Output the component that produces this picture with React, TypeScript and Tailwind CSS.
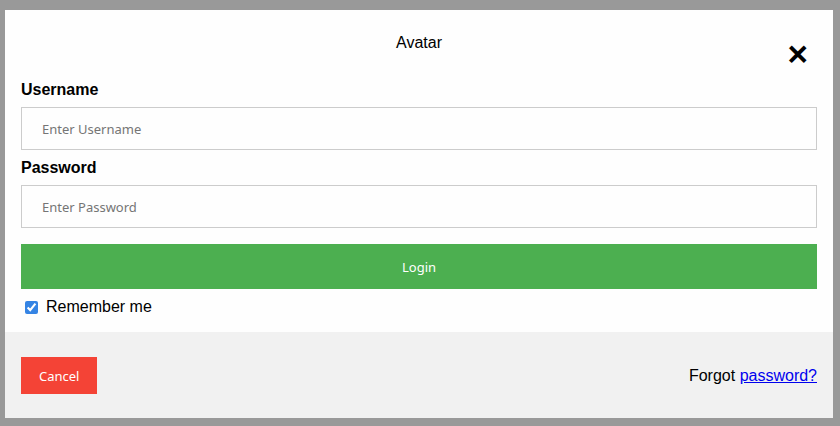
export default function App() {
  return (
    <div className="min-h-screen bg-[#999999] pt-[10px] font-['Liberation_Sans',Arial,sans-serif]">
      <div className="ml-[5px] w-[828px] bg-[#fefefe] flex flex-col">
        {/* Header with avatar alt text and close */}
        <div className="relative mt-[24px] mb-[12px] h-[18px] text-center text-[16px] leading-[18px] text-black">
          Avatar
          <span className="absolute right-[25px] top-0 text-[35px] font-bold leading-[39px] text-black cursor-pointer">
            ×
          </span>
        </div>

        <div className="px-4 pt-4 pb-[17px] flex flex-col">
          <label className="h-[18px] pt-px text-[16px] leading-[18px] font-bold text-black">Username</label>
          <input
            type="text"
            placeholder="Enter Username"
            className="mt-[9px] h-[43px] w-full border border-[#ccc] px-5 text-[13px] font-['Noto_Sans',sans-serif] placeholder:text-[#757575] outline-none"
          />
          <label className="mt-2 h-[18px] pt-px text-[16px] leading-[18px] font-bold text-black">Password</label>
          <input
            type="password"
            placeholder="Enter Password"
            className="mt-[9px] h-[43px] w-full border border-[#ccc] px-5 text-[13px] font-['Noto_Sans',sans-serif] placeholder:text-[#757575] outline-none"
          />
          <button className="mt-4 h-[45px] w-full pt-[2px] bg-[#4CAF50] text-white text-[13px] font-['Noto_Sans',sans-serif]">
            Login
          </button>
          <label className="mt-2 h-[18px] pt-[2px] flex items-center text-[16px] leading-[18px] text-black">
            <input
              type="checkbox"
              defaultChecked
              className="ml-[4px] mr-[8px] w-[13px] h-[13px] accent-[#3584e4]"
            />
            Remember me
          </label>
        </div>

        <div className="h-[86px] bg-[#f1f1f1] px-4 pt-[25px] flex items-start justify-between">
          <button className="h-[37px] px-[18px] pt-[2px] bg-[#f44336] text-white text-[13px] font-['Noto_Sans',sans-serif]">
            Cancel
          </button>
          <span className="h-[37px] flex items-center text-[16px] text-black">
            Forgot&nbsp;<a href="#" className="text-[#0000ee] underline">password?</a>
          </span>
        </div>
      </div>
    </div>
  );
}
